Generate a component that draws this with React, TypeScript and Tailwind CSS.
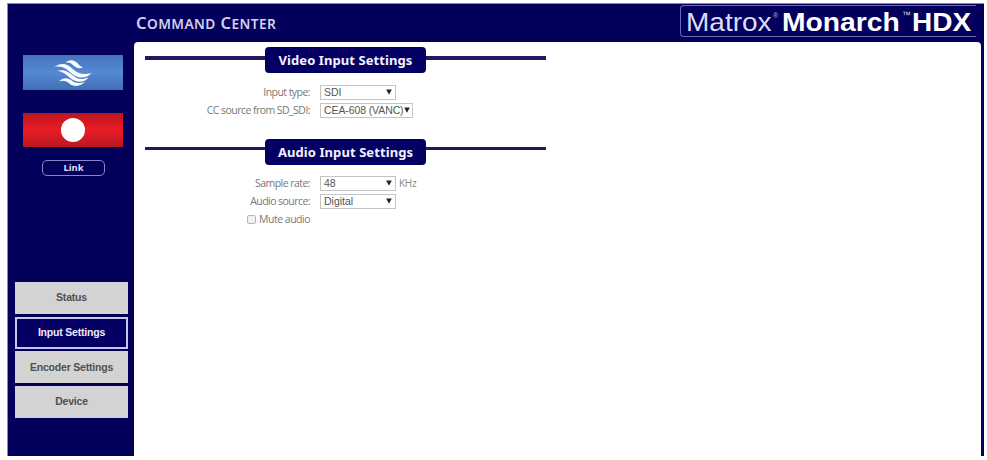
import React from "react";

const ui = "font-['Open_Sans','Noto_Sans',sans-serif]";

function Heading({ children, thin }: { children: React.ReactNode; thin?: boolean }) {
  return (
    <div className="relative flex h-[26px] w-[401px] justify-center">
      <div className={`absolute left-0 w-full bg-[#25175f] ${thin ? "top-[8px] h-[3px]" : "top-[9px] h-[4px]"}`} />
      <h2 className="relative flex h-[26px] w-[161px] items-center justify-center rounded-[4px] bg-[#040063] pt-[2px] font-['Noto_Sans','Open_Sans',sans-serif] text-[13px] font-bold tracking-[0.08px] whitespace-nowrap text-[#f4f2ff]">
        {children}
      </h2>
    </div>
  );
}

function Select({ value, wide }: { value: string; wide?: boolean }) {
  return (
    <div
      className={`flex h-[15px] items-center justify-between border border-[#c4c4c4] bg-white pr-[3px] pl-[3px] font-['Liberation_Sans',sans-serif] text-[10.5px] leading-none whitespace-nowrap text-[#555] ${wide ? "w-[93px] tracking-[-0.1px]" : "w-[76px]"}`}
    >
      <span>{value}</span>
      <svg viewBox="0 0 6 6" className={`h-[6px] w-[6px] shrink-0 ${wide ? "-mr-[1px]" : ""}`}>
        <path d="M0.2 0.4H5.8L3 5.8Z" fill="#222" />
      </svg>
    </div>
  );
}

function Row({ label, children }: { label: string; children?: React.ReactNode }) {
  return (
    <div className="flex h-[18px] items-center gap-[10px]">
      <label className={`w-[165px] pt-[2px] text-right text-[10.5px] tracking-[-0.55px] whitespace-nowrap text-[#777] ${ui}`}>{label}</label>
      {children}
    </div>
  );
}

function NavItem({ label, active }: { label: string; active?: boolean }) {
  return (
    <button
      className={`flex h-[32px] w-[113px] items-center justify-center font-['Liberation_Sans',sans-serif] text-[10.5px] font-bold tracking-[-0.2px] whitespace-nowrap ${active ? "border-2 border-[#c9c6ee] bg-[#040063] text-[#eceaff]" : "bg-[#d3d3d3] text-[#505050]"}`}
    >
      {label}
    </button>
  );
}

export default function App() {
  return (
    <div className="h-[460px] w-[987px] overflow-hidden bg-white pt-[3px] pl-[7px]">
      <div className="flex h-[453px] w-[977px] border-t border-l border-[#8884bd] bg-[#02005b]">
        <aside className="flex w-[126px] shrink-0 flex-col">
          <div className="mt-[51px] ml-[15px] flex h-[35px] w-[100px] items-center justify-center bg-linear-to-b from-[#4474b8] via-[#5688d4] to-[#4070b4]">
            <svg viewBox="0 0 38 28" className="h-[28px] w-[38px]" fill="#f7fbff">
              <path d="M11 4C15.500 0 20.500 0.800 24 4.800C25.500 6.800 27 7.800 29 8.200C25.500 10.400 22 9 19 6C16.500 3.600 14 3 11 4Z" />
              <path d="M0 8C7 3 13.500 4.600 18.500 9.700C23.500 14.800 30 16 37.500 14C31.500 21 22 19.200 15.800 13C11 8.300 5.500 6.800 0 8Z" />
              <path d="M3 11.800C9 10.200 13.500 11.800 18 15.800C23 20.200 28.500 21.200 34.500 18.600C29.500 25 21 23.600 15.200 18.300C11.500 14.500 7.500 12.200 3 11.800Z" />
              <path d="M5 22.400C9.500 18 14 18.400 18 21.800C22 24.800 26.500 24.400 31 22.800C26.500 28.200 19.200 27.800 15 24.200C12 21.800 8.500 21.300 5 22.400Z" />
            </svg>
          </div>
          <div className="mt-[23px] ml-[15px] flex h-[34px] w-[100px] items-center justify-center bg-linear-to-b from-[#bb1720] via-[#e91b25] to-[#b91820]">
            <div className="h-[24px] w-[24px] rounded-full bg-white" />
          </div>
          <button className="mt-[13px] ml-[34px] flex h-[16px] w-[63px] items-center justify-center rounded-[5px] border border-[#8a86c8] pt-[1px] font-['Noto_Sans',sans-serif] text-[9.5px] font-bold text-[#e0def8]">
            Link
          </button>
          <nav className="mt-[106px] ml-[7px] flex flex-col gap-[2.7px]">
            <NavItem label="Status" />
            <NavItem label="Input Settings" active />
            <NavItem label="Encoder Settings" />
            <NavItem label="Device" />
          </nav>
        </aside>
        <div className="flex grow flex-col">
          <header className="flex h-[38px] items-start justify-between">
            <h1 className="mt-[7px] ml-[2px] font-['Noto_Sans','Open_Sans',sans-serif] text-[16.5px] leading-[24px] font-semibold tracking-[0.42px] whitespace-nowrap text-[#d3cfee]">
              C<span className="text-[13.7px]">OMMAND</span> C<span className="text-[13.7px]">ENTER</span>
            </h1>
            <div className="mt-[1px] mr-[8px] flex h-[32px] w-[296px] items-center rounded-l-[4px] border border-r-0 border-[#6e69b2] pt-[2px] pl-[5px] font-['Liberation_Sans',sans-serif] text-[25px] leading-none whitespace-nowrap text-white">
              <span className="w-[87px] origin-left scale-x-[1.12] text-[#dedbf9]">Matrox</span>
              <span className="-mt-[14px] w-[9px] text-[7px] text-[#b5b1e4]">®</span>
              <span className="w-[120px] origin-left scale-x-[1.13] font-bold">Monarch</span>
              <span className="-mt-[14px] w-[10px] text-[9px] text-[#d5d2f5]">™</span>
              <span className="origin-left scale-x-[1.12] font-bold">HDX</span>
            </div>
          </header>
          <main className="mr-[3px] grow rounded-t-[4px] bg-white pt-[5px] pl-[11px]">
            <Heading>Video Input Settings</Heading>
            <div className="mt-[10px]">
              <Row label="Input type:">
                <Select value="SDI" />
              </Row>
              <Row label="CC source from SD_SDI:">
                <Select value="CEA-608 (VANC)" wide />
              </Row>
            </div>
            <div className="mt-[20px]">
              <Heading thin>Audio Input Settings</Heading>
            </div>
            <div className="mt-[9px]">
              <Row label="Sample rate:">
                <Select value="48" />
                <span className={`-ml-[7px] pt-[1px] text-[10px] tracking-[-0.3px] text-[#888] ${ui}`}>KHz</span>
              </Row>
              <Row label="Audio source:">
                <Select value="Digital" />
              </Row>
              <div className="flex h-[18px] w-[165px] items-center justify-end gap-[3px]">
                <span className="h-[9px] w-[9px] rounded-[2px] border border-[#b5b5b5] bg-[#f1f1f1]" />
                <span className={`pt-[2px] text-[10.5px] tracking-[-0.5px] text-[#777] ${ui}`}>Mute audio</span>
              </div>
            </div>
          </main>
        </div>
      </div>
    </div>
  );
}
